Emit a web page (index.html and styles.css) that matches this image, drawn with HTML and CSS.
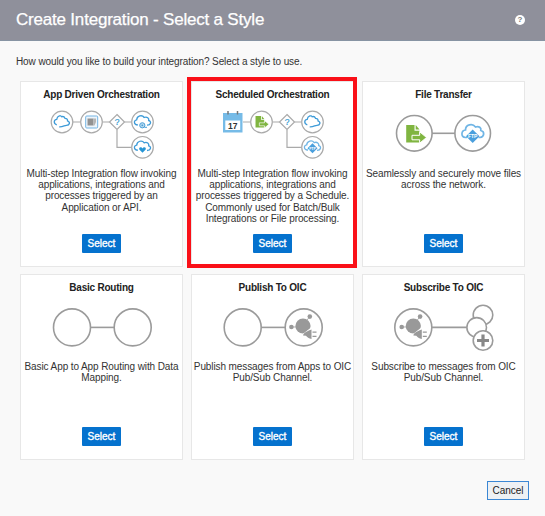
FILE: index.html
```html
<!DOCTYPE html>
<html lang="en">
<head>
<meta charset="utf-8">
<title>Create Integration - Select a Style</title>
<link rel="stylesheet" href="styles.css">
</head>
<body>
<svg class="defs" width="0" height="0">
  <defs>
    <path id="cloud" d="M-5.200 2.800C-8.800 1.800-8.300-2.300-5.300-2.600C-4.800-6.500-.3-7-.9 -5.200M-.9-5.200C1.500-6 2.500-5 3-3.700C5.200-3.700 5.600-2.200 5.500-1.200C8.500 0 7.800 3.300 4.500 3.300C2.500 3.200 1 5.200-2.800 4.900"/>
    <path id="cloudtop" d="M-4.500 3.200C-8.800 3.500-9.200-1.400-5.800-1.900C-5.500-6-.5-7.300 1.700-4.200C4.600-5.400 6.800-3.200 6.200-1.200C9.200-.4 8.500 3.500 4.500 3.500"/>
    <g id="file"><path d="M-8.300-8.300H0V-2.500H5V9.200H-8.300Z" fill="#80b541"/><path d="M1.200-8.300L5-3.700H1.200Z" fill="#80b541"/><path d="M-2.500 2H5.200V-1.500L12 4.200L5.200 9.900V6.500H-2.500Z" fill="#80b541" stroke="#fff"/></g>
    <g id="plug"><circle cx="0" cy="-1.400" r="7.600" fill="#999"/><circle cx="-11.600" cy="-.4" r="2.300" fill="#999"/><circle cx="6.800" cy="-10.800" r="2.300" fill="#999"/><path d="M-11-.4H-5M2-5L7-11" stroke="#999" stroke-width=".8"/><path d="M-1.500 7.500L8 0V13L5 10.500L2 9.500Z" fill="#fff"/><path d="M0 8C1 4.500 5 3.500 8.500 2V11.500C6 11 4 9.800 3 8.300Z" fill="#999"/><path d="M9.500 4.800H13.500M9.500 9H13.500" stroke="#999" stroke-width="1.300"/></g>
  </defs>
</svg>
<header class="header"><h1>Create Integration - Select a Style</h1><span class="help">?</span></header>
<main class="main">
  <p class="intro">How would you like to build your integration? Select a style to use.</p>
  <div class="grid">
    <section class="card">
      <h2>App Driven Orchestration</h2>
      <svg class="art" viewBox="21 102 161 62">
        <g class="line thin"><path d="M73 122H80.500M102.500 122H109.500M124.500 122H131.500M117 129.500V147.300H131.500"/><circle cx="62" cy="122" r="10.800"/><circle cx="91.500" cy="122" r="10.800"/><circle cx="142.500" cy="122" r="10.800"/><circle cx="142.500" cy="147.300" r="10.800"/><path d="M117 114.500L124.500 122L117 129.500L109.500 122Z"/></g>
        <use href="#cloud" class="cloud" x="62" y="122"/>
        <rect x="85.700" y="116" width="12" height="12" rx="1" fill="#eef5fb" stroke="#75b5e4"/><path d="M87.500 118.500H93.500V125.500H87.500Z" fill="#929292"/><path d="M93.500 118.500H96V122L94.500 125.500H93.500Z" fill="#b5b5b5"/>
        <text x="117" y="125" class="q">?</text>
        <use href="#cloudtop" class="cloud" x="142.500" y="121.700"/><circle cx="142.300" cy="125.300" r="2.600" fill="#b9dbef" stroke="#4a9fd8"/><circle cx="142.300" cy="125.300" r=".9" fill="#4a9fd8"/><path d="M144.500 127.300H147" stroke="#4a9fd8"/>
        <use href="#cloudtop" class="cloud" x="142.500" y="147"/><path d="M142.500 152.700L139.300 149.500C138.500 147 141.500 146.500 142.500 148.500C143.500 146.500 146.500 147 145.700 149.500Z" fill="#2695d5"/>
      </svg>
      <p>Multi-step Integration flow invoking<br>applications, integrations and<br>processes triggered by an<br>Application or API.</p>
      <button>Select</button>
    </section>
    <section class="card marked">
      <h2>Scheduled Orchestration</h2>
      <svg class="art" viewBox="192 102 161 62">
        <g class="line thin"><path d="M243 122H250.500M272.500 122H279.500M294.500 122H301.500M287 129.500V147.300H301.500"/><circle cx="261.500" cy="122" r="10.800"/><circle cx="312.500" cy="122" r="10.800"/><circle cx="312.500" cy="147.300" r="10.800"/><path d="M287 114.500L294.500 122L287 129.500L279.500 122Z"/></g>
        <path d="M223 113H242.500V132.500H223Z" fill="#76bbe7"/><path d="M225.300 120.500H240.200V130H225.300Z" fill="#fff"/><path d="M228 111V114.500M237.500 111V114.500" stroke="#777" stroke-width="1.500"/><text x="232.700" y="128.500" class="day">17</text>
        <use href="#file" transform="translate(261 121.500) scale(.66)"/><text x="287" y="125" class="q">?</text>
        <use href="#cloud" class="cloud" x="312.500" y="122"/>
        <use href="#cloudtop" class="cloud pale" x="312.500" y="146.800"/><path d="M312.500 143.300L317.500 148.300L312.500 153.300L307.500 148.300Z" fill="#4a9fdd"/><text x="312.500" y="149.700" class="ftp small">FTP</text>
      </svg>
      <p>Multi-step Integration flow invoking<br>applications, integrations and<br>processes triggered by a Schedule.<br>Commonly used for Batch/Bulk<br>Integrations or File processing.</p>
      <button>Select</button>
    </section>
    <section class="card">
      <h2>File Transfer</h2>
      <svg class="art" viewBox="363 102 161 62">
        <g class="line"><circle cx="414.300" cy="133.300" r="17.800"/><circle cx="472.700" cy="133.300" r="17.800"/><path d="M432 133.300H455"/></g>
        <use href="#file" x="414.500" y="133.300"/>
        <path class="cloud big" d="M467 137.500H465.500C460.500 137 461 130.500 465.500 130C465.500 124.500 472.500 123 475.500 127C479 125.500 481.500 128 480.800 130.500C485 131.500 484.500 137 480 137.500H478.500"/><path d="M472.700 129.500L479.500 136.300L472.700 143L466 136.300Z" fill="#4a9fdd"/><text x="472.700" y="138.200" class="ftp">FTP</text>
      </svg>
      <p>Seamlessly and securely move files<br>across the network.</p>
      <button>Select</button>
    </section>
    <section class="card">
      <h2>Basic Routing</h2>
      <svg class="art" viewBox="21 295 161 62"><g class="line"><circle cx="72" cy="327.400" r="18.500"/><circle cx="132.700" cy="327.400" r="18.500"/><path d="M90.500 327.400H114.200"/></g></svg>
      <p>Basic App to App Routing with Data<br>Mapping.</p>
      <button>Select</button>
    </section>
    <section class="card">
      <h2>Publish To OIC</h2>
      <svg class="art" viewBox="192 295 161 62"><g class="line"><circle cx="242.700" cy="327.400" r="18.500"/><circle cx="303.700" cy="327.400" r="18.500"/><path d="M261.200 327.400H285.200"/></g><use href="#plug" x="303" y="327.400"/></svg>
      <p>Publish messages from Apps to OIC<br>Pub/Sub Channel.</p>
      <button>Select</button>
    </section>
    <section class="card">
      <h2>Subscribe To OIC</h2>
      <svg class="art" viewBox="363 295 161 62"><g class="line"><circle cx="413.300" cy="327.400" r="18.500"/><path d="M431.800 327.400H467"/><circle cx="483" cy="315" r="9.800"/><circle cx="476.700" cy="327.400" r="9.800"/><circle cx="483" cy="340.500" r="9.800"/></g><path d="M483 334.500V346.500M477 340.500H489" stroke="#888" stroke-width="3.200"/><use href="#plug" x="413.300" y="327.400"/></svg>
      <p>Subscribe to messages from OIC<br>Pub/Sub Channel.</p>
      <button>Select</button>
    </section>
  </div>
  <footer><button class="cancel">Cancel</button></footer>
</main>
</body>
</html>
```
FILE: styles.css
```css
* { box-sizing: border-box; }
body { margin: 0; width: 545px; height: 516px; overflow: hidden; background: #f9f9f9; color: #333; font-family: "Liberation Sans", Arial, sans-serif; font-size: 10px; letter-spacing: -.1px; }
h1, h2, p { margin: 0; white-space: nowrap; }
.defs { display: block; }
.header { height: 41px; background: #8f909b; border-bottom: 1px solid #8794a3; display: flex; align-items: center; justify-content: space-between; padding: 0 20px 1px 16px; }
h1 { color: #fff; font-size: 17px; font-weight: 400; letter-spacing: -.2px; -webkit-text-stroke: .25px #fff; }
.help { width: 10px; height: 10px; border-radius: 50%; background: #fff; color: #777; font-size: 8px; line-height: 10px; font-weight: 700; text-align: center; letter-spacing: 0; }
.main { padding: 14px 0 0 20px; }
.intro { height: 26px; line-height: 13px; margin-left: -4px; }
.grid { display: grid; grid-template-columns: repeat(3, 163px); grid-template-rows: repeat(2, 186px); gap: 7px 8px; }
.card { position: relative; background: #fff; border: 1px solid #e7e7e7; display: flex; flex-direction: column; align-items: center; text-align: center; }
.card h2 { height: 20px; padding-top: 7px; font-size: 10px; line-height: 12px; letter-spacing: -.22px; color: #222; }
.art { width: 161px; height: 62px; display: block; flex: none; }
.card p { height: 70px; padding-top: 4px; line-height: 11.2px; }
.marked::after { content: ""; position: absolute; inset: -5px -4px -2px -5px; border: 4px solid #fa1018; }
button { font-family: inherit; font-size: 10px; padding: 0; letter-spacing: 0; }
.card button { width: 39px; height: 19px; border: 0; border-radius: 1px; background: #0572ce; color: #fff; font-weight: 400; -webkit-text-stroke: .35px #fff; }
footer { display: flex; justify-content: flex-end; padding: 20.5px 16px 0 0; }
.cancel { width: 42px; height: 19px; color: #222; background: #eef1f4; border: 1px solid #3b87d4; }
.line { fill: #fff; stroke: #9b9b9b; stroke-width: 1.6; }
.thin { stroke: #aaa; stroke-width: 1.2; }
.cloud { fill: none; stroke: #3d9bd8; stroke-width: 1.3; }
.pale { stroke: #70b5e5; }
.big { stroke: #70b5e5; stroke-width: 1.7; }
.q { fill: #359bd0; font-size: 8.5px; text-anchor: middle; letter-spacing: 0; stroke: #359bd0; stroke-width: .2; }
.day { fill: #333; font-size: 8.5px; font-weight: 700; text-anchor: middle; letter-spacing: 0; }
.ftp { fill: #fff; font-size: 5px; font-weight: 700; text-anchor: middle; letter-spacing: 0; }
.small { font-size: 3.5px; }
```
